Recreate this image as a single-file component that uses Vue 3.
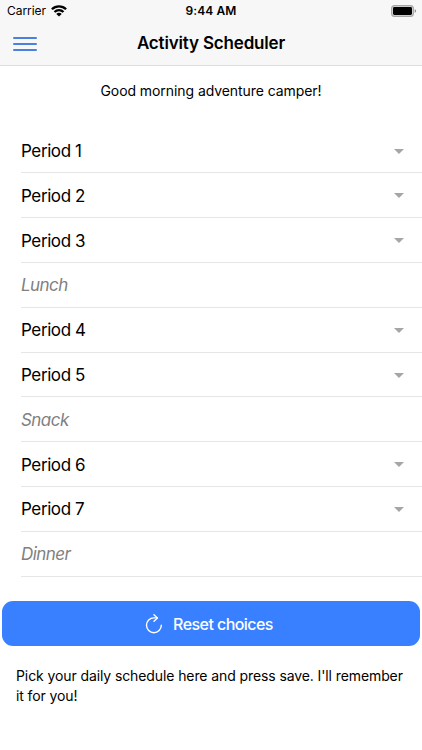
<script setup>
import { ref } from 'vue'

const rows = ref([
  { label: 'Period 1', meal: false },
  { label: 'Period 2', meal: false },
  { label: 'Period 3', meal: false },
  { label: 'Lunch', meal: true },
  { label: 'Period 4', meal: false },
  { label: 'Period 5', meal: false },
  { label: 'Snack', meal: true },
  { label: 'Period 6', meal: false },
  { label: 'Period 7', meal: false },
  { label: 'Dinner', meal: true },
])
</script>

<template>
  <div class="screen">
    <header class="header">
      <div class="status">
        <div class="status-left">
          <span class="carrier">Carrier</span>
          <svg class="wifi" width="16" height="12" viewBox="0 0 16 12">
            <g fill="none" stroke="#000" stroke-width="2.3">
              <path d="M.9 4.3a10 10 0 0 1 14.2 0" />
              <path d="M3.5 7a6.3 6.3 0 0 1 9 0" />
            </g>
            <path d="M8 11.6 5.3 9a3.6 3.6 0 0 1 5.4 0z" />
          </svg>
        </div>
        <span class="time">9:44 AM</span>
        <div class="status-right">
          <svg width="26" height="12" viewBox="0 0 26 12">
            <rect x="0.6" y="0.6" width="21.8" height="10.8" rx="3" fill="#d8d8d8" stroke="#a5a5a5" stroke-width="1.1" />
            <rect x="2" y="2" width="19" height="8" rx="1.4" />
            <path d="M23.7 4.2v3.6c.9-.3 1.4-1 1.4-1.8s-.5-1.5-1.4-1.8z" fill="#8d8d8d" />
          </svg>
        </div>
      </div>
      <div class="toolbar">
        <button class="menu" aria-label="Menu">
          <span class="menu-line"></span>
          <span class="menu-line"></span>
          <span class="menu-line"></span>
        </button>
        <h1 class="title">Activity Scheduler</h1>
      </div>
    </header>

    <main>
      <p class="greeting">Good morning adventure camper!</p>

      <ul class="list">
        <li v-for="row in rows" :key="row.label" class="row">
          <span :class="['row-label', row.meal && 'row-label--meal']">{{ row.label }}</span>
          <span v-if="!row.meal" class="caret"></span>
        </li>
      </ul>

      <button class="reset">
        <svg class="reset-icon" width="18" height="20" viewBox="0 0 18 20">
          <g fill="none" stroke="#fff" stroke-width="1.4" stroke-linecap="round" stroke-linejoin="round">
            <path d="M16.3 11.3a7.4 7.4 0 1 1-7.4-7.4h3.3" />
            <path d="M9 .8l3.4 3.2L9 7.3" />
          </g>
        </svg>
        <span class="reset-label">Reset choices</span>
      </button>

      <p class="hint">Pick your daily schedule here and press save. I'll remember it for you!</p>
    </main>
  </div>
</template>

<style>
body {
  margin: 0;
  background: #fff;
}
</style>

<style scoped>
.screen {
  width: 100%;
  height: 750px;
  overflow: hidden;
  background: #fff;
  color: #000;
  font-family: Inter, "Liberation Sans", sans-serif;
}

.header {
  box-sizing: border-box;
  height: 66px;
  background: #f7f7f7;
  border-bottom: 1px solid #dedede;
}

.status {
  display: grid;
  grid-template-columns: 1fr auto 1fr;
  align-items: center;
  height: 21px;
  padding: 0 5px 0 7px;
  font-size: 12px;
}

.status-left {
  display: flex;
  align-items: center;
  gap: 5px;
}

.carrier {
  letter-spacing: -0.05px;
}

.time {
  margin-right: 2px;
  font-weight: 600;
  letter-spacing: 0.1px;
}

.status-right {
  display: flex;
  justify-content: flex-end;
}

.status-right svg {
  display: block;
}

.toolbar {
  display: grid;
  grid-template-columns: 50px 1fr 50px;
  align-items: center;
  height: 45px;
}

.menu {
  display: flex;
  flex-direction: column;
  gap: 4px;
  width: 24px;
  margin-left: 13px;
  padding: 0;
  border: none;
  background: none;
}

.menu-line {
  width: 24px;
  height: 2px;
  border-radius: 1px;
  background: #4a80df;
}

.title {
  margin: 0 0 2px;
  text-align: center;
  font-size: 17px;
  line-height: 24px;
  font-weight: 600;
  letter-spacing: -0.17px;
}

.greeting {
  margin: 15px 0 0;
  text-align: center;
  font-size: 14px;
  line-height: 20px;
  letter-spacing: -0.07px;
}

.list {
  list-style: none;
  margin: 27.7px 0 0;
  padding: 0 0 0 21px;
}

.row {
  box-sizing: border-box;
  display: flex;
  align-items: center;
  justify-content: space-between;
  height: 44.8px;
  padding: 1px 18px 0 0;
  border-bottom: 1px solid #e6e6e6;
}

.row-label {
  font-size: 17px;
  letter-spacing: -0.4px;
}

.row-label--meal {
  font-style: italic;
  letter-spacing: -0.55px;
  color: #808080;
}

.caret {
  border-left: 5.5px solid transparent;
  border-right: 5.5px solid transparent;
  border-top: 5px solid #a6a6a6;
}

.reset {
  display: flex;
  align-items: center;
  justify-content: center;
  gap: 10px;
  width: calc(100% - 4px);
  height: 45.4px;
  margin: 24.3px 2px 0;
  padding: 0 4px 0 0;
  border: none;
  border-radius: 11px;
  background: #3880ff;
  color: #fff;
  font-family: inherit;
}

.reset-label {
  padding-top: 1px;
  font-size: 16px;
  font-weight: 500;
  letter-spacing: -0.56px;
}

.hint {
  margin: 19.6px 12px 0 16px;
  font-size: 14px;
  line-height: 20.5px;
  letter-spacing: -0.1px;
}
</style>
